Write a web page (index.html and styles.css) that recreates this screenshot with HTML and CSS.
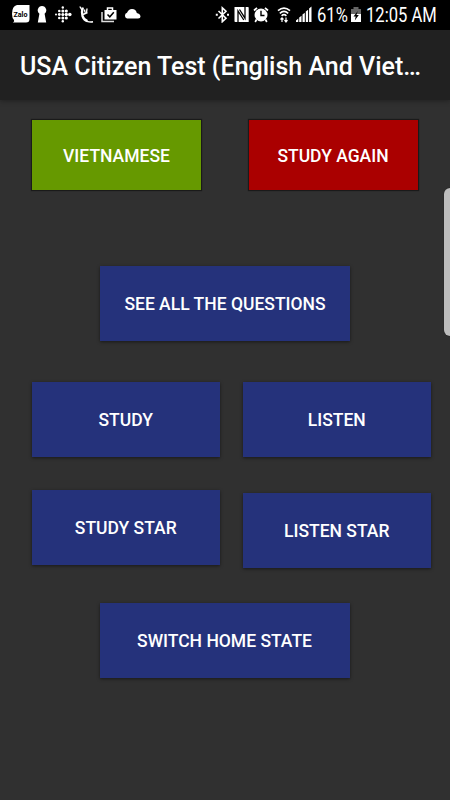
FILE: index.html
```html
<!DOCTYPE html>
<html lang="en">
<head>
<meta charset="utf-8">
<title>USA Citizen Test</title>
<link rel="stylesheet" href="styles.css">
</head>
<body>
<div class="status">
  <div class="notifications">
    <svg width="18" height="18" viewBox="0 0 18 18"><path fill="#fff" d="M5 0H17.500V14Q17.500 17.500 14 17.500H.8Q2.800 16.500 2 15Q0 13 0 9Q0 1 5 0Z"/><text class="zalo" x="1.500" y="11.500" textLength="14" lengthAdjust="spacingAndGlyphs">Zalo</text></svg>
    <svg width="10" height="18" viewBox="0 0 10 18"><path fill="#fff" d="M5 1a4.300 4.300 0 0 1 2.600 7.700L9.200 17.500H.8L2.400 8.700A4.300 4.300 0 0 1 5 1Z"/></svg>
    <svg width="18" height="18" viewBox="0 0 18 18" fill="#fff"><circle cx="2" cy="9.500" r="1"/><circle cx="5.300" cy="6" r="1.300"/><circle cx="5.300" cy="9.500" r="1.400"/><circle cx="5.300" cy="13" r="1.300"/><circle cx="8.800" cy="2.500" r="1.200"/><circle cx="8.800" cy="6" r="1.500"/><circle cx="8.800" cy="9.500" r="1.500"/><circle cx="8.800" cy="13" r="1.500"/><circle cx="8.800" cy="16.300" r="1.200"/><circle cx="12.300" cy="6" r="1.600"/><circle cx="12.300" cy="9.500" r="1.700"/><circle cx="12.300" cy="13" r="1.600"/><circle cx="15.800" cy="9.500" r="1.800"/></svg>
    <svg width="15" height="18" viewBox="0 0 15 18" fill="none" stroke="#fff"><path d="M.8 1.500L3.500 6" stroke-width="1.300"/><path d="M3.800 2.500C1.800 9 3.500 14.500 8.500 16.200" stroke-width="2.400"/><path d="M4 9.500L8.500 7.500M5.500 4.500l.5 3M8 3.500L7.500 8M8 16.300q3 1 6 .5" stroke-width="1.400"/></svg>
    <svg width="16" height="18" viewBox="0 0 16 18"><path d="M1 7v9.500h12" fill="none" stroke="#ddd" stroke-width="1.500"/><path d="M6.500 5V3h5v2" fill="none" stroke="#fff" stroke-width="1.500"/><path d="M3.500 5h12v9.500h-12z" fill="#fff"/><path d="M6.500 9.500l2.300 2.300 4-4.500" fill="none" stroke="#000" stroke-width="1.500"/></svg>
    <svg width="17" height="18" viewBox="0 0 17 18"><path fill="#fff" d="M3 13.500a3 3 0 0 1 0-5.700Q4.500 4 8 4q4 .2 4.800 4Q16 8.500 16.500 11q0 2.500-2.500 2.500Z"/></svg>
  </div>
  <div class="system">
    <svg class="bt" width="15" height="18" viewBox="0 0 15 18" fill="none" stroke="#fff" stroke-width="1.600"><path d="M3.500 6l7.500 7.300-3.700 3.400V2.800L11 6.200l-7.500 7.300"/><path d="M.8 9.700h2M12 9.700h2" stroke-width="2"/></svg>
    <svg class="nfc" width="15" height="18" viewBox="0 0 15 18"><path fill="#fff" d="M.5 2H14q.7 0 .7.700V17H1.200q-.7 0-.7-.7z"/><path fill="none" stroke="#000" stroke-width="1.300" d="M4 17V6L9.800 15M5.500 4.500l5.500 8.700V2"/></svg>
    <svg class="alarm" width="16" height="18" viewBox="0 0 16 18"><circle cx="8" cy="10" r="6.500" fill="#fff"/><path d="M1 5.500L4 2.800M12 2.800l3 2.700M3.500 14.500L2.200 17M12.500 14.500l1.300 2.500" stroke="#fff" stroke-width="1.700"/><path d="M8 5.800v4.700h3.500" fill="none" stroke="#000" stroke-width="1.400"/></svg>
    <svg class="wifi" width="14" height="18" viewBox="0 0 14 18" fill="none" stroke="#fff"><path d="M1 5.700q6-5.200 12 0M2.800 8.300q4.200-3.800 8.400 0M4.600 10.800q2.400-2.200 4.800 0" stroke-width="1.600"/><path d="M5 17v-4M3.500 14.500L5 12.800l1.500 1.700M9 12.500v4M7.500 15.200L9 17l1.500-1.800" stroke-width="1.200"/></svg>
    <svg class="signal" width="16" height="18" viewBox="0 0 16 18" fill="#fff"><path d="M0 17v-1.500l2.300-2V17zM3.200 17v-4.500l2.300-1.800V17zM6.500 17V9.500l2.300-1.800V17zM9.800 17V6.500l2.300-1.800V17zM13.100 17V3.500l2.400-2V17z"/></svg>
    <span class="percent"><span>61%</span></span>
    <svg class="battery" width="10" height="18" viewBox="0 0 10 18"><path fill="#666" d="M0 4h2.500V2h5v2H10v5H0z"/><path fill="#fff" d="M0 9h10v8H0z"/><path fill="#000" d="M6.800 6L2.500 11.500h2.200L3.800 15.500 7.800 10H5.500z"/></svg>
    <span class="clock"><span>12:05 AM</span></span>
  </div>
</div>
<header class="appbar"><h1>USA Citizen Test (English And Viet…</h1></header>
<main>
  <div class="row top">
    <button class="green">VIETNAMESE</button>
    <button class="red">STUDY AGAIN</button>
  </div>
  <button class="wide all">SEE ALL THE QUESTIONS</button>
  <div class="modes">
    <div class="column"><button>STUDY</button><button>STUDY STAR</button></div>
    <div class="column listen"><button>LISTEN</button><button>LISTEN STAR</button></div>
  </div>
  <button class="wide switch">SWITCH HOME STATE</button>
  <div class="edge-handle"></div>
</main>
</body>
</html>
```

FILE: styles.css
```css
* { box-sizing: border-box; }
body {
  margin: 0;
  width: 450px;
  height: 800px;
  overflow: hidden;
  background: #303030;
  color: #fff;
  font-family: Roboto, sans-serif;
}
.status {
  height: 30px;
  background: #000;
  display: flex;
  justify-content: space-between;
  padding: 5px 14px 0 12px;
}
.status svg { display: block; flex: none; }
.zalo { font: bold 7px Roboto, sans-serif; fill: #000; }
.notifications { display: flex; gap: 7px; }
.system { display: flex; }
.bt { margin-right: 4px; }
.nfc { margin-right: 4px; }
.alarm { margin-right: 8px; }
.wifi { margin-right: 5px; }
.signal { margin-right: 5px; }
.percent, .clock {
  font-size: 19.500px;
  line-height: 22px;
  white-space: nowrap;
}
.percent { width: 30px; margin-right: 4px; }
.battery { margin-right: 5px; }
.clock { width: 70px; }
.percent span, .clock span {
  display: inline-block;
  transform: scaleX(.85);
  transform-origin: left;
}
.appbar {
  position: relative;
  height: 70px;
  background: #212121;
  box-shadow: 0 1px 5px rgba(0, 0, 0, .35);
  padding: 0 20px;
  display: flex;
  align-items: center;
}
h1 {
  margin: 0;
  padding-top: 4px;
  font-size: 25px;
  line-height: 32px;
  font-weight: 500;
  white-space: nowrap;
}
main {
  position: relative;
  height: 700px;
  padding: 20px 19.500px 0 32px;
  display: flex;
  flex-direction: column;
}
button {
  display: block;
  width: 187.500px;
  height: 75px;
  border: 0;
  padding: 1px 0 0;
  background: #25327b;
  color: #fff;
  font: 500 17.500px Roboto, sans-serif;
  box-shadow: 0 1px 3px rgba(0, 0, 0, .5);
}
.row { display: flex; justify-content: space-between; }
.top { width: 385.500px; }
.top button {
  width: 169px;
  height: 70px;
  padding-top: 2px;
  box-shadow: 0 0 1px 1px rgba(0, 0, 0, .45);
}
.top .green { background: #690; }
.top .red { background: #a00; }
.wide { width: 250px; }
.all { margin: 76px 0 0 68px; }
.modes { display: flex; gap: 23.500px; margin-top: 40.500px; }
.column { display: flex; flex-direction: column; gap: 33.500px; }
.listen { gap: 36px; }
.listen button:last-child { padding-top: 2px; }
.switch { margin: 35px 0 0 67.500px; }
.edge-handle {
  position: absolute;
  right: 0;
  top: 88px;
  width: 6px;
  height: 148px;
  background: #bdbdbd;
  border-radius: 7px 0 0 7px;
  box-shadow: 0 0 1px #111;
}
```
